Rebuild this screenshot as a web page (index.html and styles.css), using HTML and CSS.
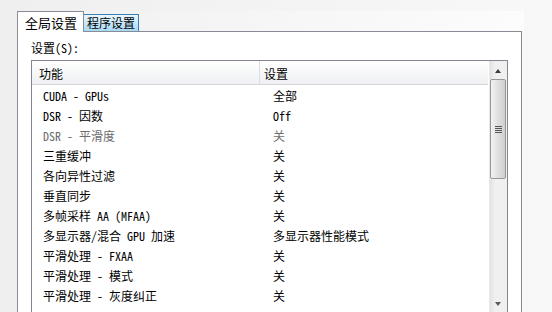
FILE: index.html
```html
<html>
<head>
  <meta charset="utf-8">
  <link rel="stylesheet" href="styles.css">
</head>
<body>
  <div class="window">
    <div class="tabs">
      <div class="tab active">全局设置</div>
      <div class="tab">程序设置</div>
    </div>
    <div class="panel">
      <div class="label">设置(S):</div>
      <div class="list">
        <div class="list-main">
          <div class="head">
            <div class="col1">功能</div>
            <div class="col2">设置</div>
          </div>
          <div class="rows">
            <div class="row"><div class="col1">CUDA - GPUs</div><div class="col2">全部</div></div>
            <div class="row"><div class="col1">DSR - 因数</div><div class="col2">Off</div></div>
            <div class="row off"><div class="col1">DSR - 平滑度</div><div class="col2">关</div></div>
            <div class="row"><div class="col1">三重缓冲</div><div class="col2">关</div></div>
            <div class="row"><div class="col1">各向异性过滤</div><div class="col2">关</div></div>
            <div class="row"><div class="col1">垂直同步</div><div class="col2">关</div></div>
            <div class="row"><div class="col1">多帧采样 AA (MFAA)</div><div class="col2">关</div></div>
            <div class="row"><div class="col1">多显示器/混合 GPU 加速</div><div class="col2">多显示器性能模式</div></div>
            <div class="row"><div class="col1">平滑处理 - FXAA</div><div class="col2">关</div></div>
            <div class="row"><div class="col1">平滑处理 - 模式</div><div class="col2">关</div></div>
            <div class="row"><div class="col1">平滑处理 - 灰度纠正</div><div class="col2">关</div></div>
          </div>
        </div>
        <div class="scrollbar">
          <div class="arrow up"></div>
          <div class="thumb"><div class="grip"></div></div>
          <div class="track"></div>
          <div class="arrow down"></div>
        </div>
      </div>
    </div>
  </div>
</body>
</html>
```

FILE: styles.css
```css
body {
  margin: 0;
  width: 552px;
  height: 312px;
  overflow: hidden;
  font-family: "Noto Sans Mono CJK SC", "Noto Sans CJK SC", monospace;
  font-size: 12px;
  color: black;
  background: linear-gradient(to right, #efefef, #f8f8f8);
}

.window {
  padding: 11px 0 0 17px;
}

.tabs {
  display: flex;
  align-items: flex-end;
  height: 20px;
  width: 507px;
  background: linear-gradient(to right, #f0f0f0, #fcfcfc);
}

.tab {
  height: 16px;
  line-height: 16px;
  padding: 0 3px;
  margin-left: -1px;
  border: 1px solid #3c7fb1;
  border-bottom: none;
  background: linear-gradient(#eaf6fd, #a7d9f5);
}

.tab.active {
  position: relative;
  z-index: 1;
  height: 20px;
  line-height: 21px;
  margin: 0 0 -1px 0;
  padding: 0 6px 0 7px;
  font-size: 13px;
  border-color: #898c95;
  background: white;
}

.panel {
  width: 505px;
  height: 290px;
  border: 1px solid #898c95;
  border-bottom: none;
  background: white;
  padding: 0 0 0 13px;
  box-sizing: border-box;
}

.label {
  height: 28px;
  line-height: 32px;
}

.list {
  display: flex;
  width: 477px;
  height: 252px;
  border: 1px solid #828790;
  border-bottom: none;
  box-sizing: border-box;
  overflow: hidden;
}

.list-main {
  flex: 1;
}

.head {
  display: flex;
  height: 23px;
  line-height: 25px;
  background: linear-gradient(white, #eef0f3);
  border-bottom: 1px solid #d5d5d5;
  margin-right: 1px;
}

.head .col1 {
  width: 220px;
  padding-left: 7px;
  border-right: 1px solid #dcdde0;
}

.head .col2 {
  padding-left: 4px;
}

.rows {
  padding-top: 1px;
}

.row {
  display: flex;
  height: 20px;
  line-height: 20px;
  white-space: nowrap;
}

.row .col1 {
  width: 217px;
  padding-left: 11px;
}

.row .col2 {
  padding-left: 13px;
}

.row.off {
  color: #6d6d6d;
}

.scrollbar {
  width: 17px;
  display: flex;
  flex-direction: column;
  background: linear-gradient(to right, #e3e3e3, #f0f0f0 30%, #f0f0f0);
  border-left: 1px solid #e8e8e8;
}

.arrow {
  height: 18px;
  flex: none;
  position: relative;
}

.arrow::after {
  content: "";
  position: absolute;
  left: 5px;
  border-left: 3px solid transparent;
  border-right: 3px solid transparent;
}

.arrow.up::after {
  top: 8px;
  border-bottom: 4px solid #3b3b3b;
}

.arrow.down::after {
  top: 7px;
  border-top: 4px solid #5a5a5a;
}

.thumb {
  flex: none;
  height: 100px;
  margin: 0 1px 0 0;
  border: 1px solid #979797;
  border-radius: 2px;
  box-sizing: border-box;
  background: linear-gradient(to right, #f2f2f2, #e0e0e0 50%, #cfcfcf);
  display: flex;
  align-items: center;
  justify-content: center;
}

.grip {
  width: 7px;
  height: 7px;
  background: repeating-linear-gradient(#555 0 1px, transparent 1px 2px);
}

.track {
  flex: none;
  height: 116px;
}
```
